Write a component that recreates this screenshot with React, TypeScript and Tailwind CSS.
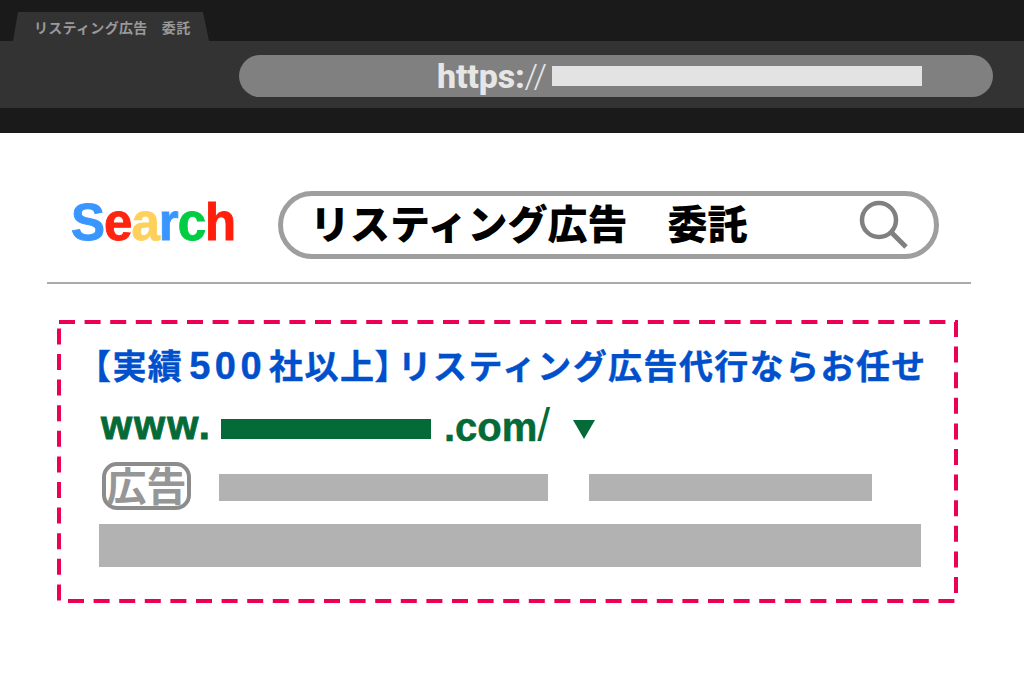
const jp = "font-['Noto_Sans_CJK_JP',sans-serif]"

function BrowserBar() {
  return (
    <header className="bg-[#1a1a1a] h-[133px]">
      <div className="h-[41px] pt-[12px] pl-[13px]">
        <div className={`h-[29px] w-[196px] bg-[#333333] [clip-path:polygon(5px_0,190px_0,196px_100%,0_100%)] pl-[21px] text-[14px] tracking-[0.3px] leading-[30px] font-bold text-[#999999] whitespace-pre ${jp}`}>
          リスティング広告　委託
        </div>
      </div>
      <div className="h-[67px] bg-[#333333] pl-[239px] pt-[14px]">
        <div className="w-[754px] h-[42px] rounded-full bg-[#808080] flex items-center pl-[198px] gap-[6px]">
          <span className="font-['Roboto',sans-serif] font-extrabold text-[34px] leading-none text-[#e6e6e6] tracking-[-0.2px]">
            https:<span className="font-light tracking-[-1px]">//</span>
          </span>
          <div className="w-[370px] h-[20px] bg-[#e3e3e3]" />
        </div>
      </div>
    </header>
  )
}

function SearchRow() {
  const logo = [
    ['S', 'text-[#3a96ff]'],
    ['e', 'text-[#ff2410]'],
    ['a', 'text-[#ffd05c]'],
    ['r', 'text-[#3a96ff]'],
    ['c', 'text-[#00cc44]'],
    ['h', 'text-[#ff1f0a]'],
  ]

  return (
    <div className="ml-[47px] w-[924px] h-[151px] pt-[58px] border-b-2 border-[#aaaaaa]">
      <div className="flex items-center">
        <div className="ml-[24px] w-[207px] h-[68px] font-['Liberation_Sans',sans-serif] font-bold text-[51px] leading-[63px] tracking-[-1px] [-webkit-text-stroke:0.9px]">
          {logo.map(([letter, color]) => (
            <span key={letter} className={color}>{letter}</span>
          ))}
        </div>
        <div className="w-[661px] h-[68px] rounded-full border-[5px] border-[#9e9e9e] flex items-center justify-between pl-[27px] pr-[24px]">
          <span className={`text-[40px] h-[58px] leading-[52px] font-black text-black whitespace-pre ${jp}`}>
            リスティング広告　委託
          </span>
          <svg width="52" height="52" viewBox="0 0 52 52" fill="none" stroke="#808080" strokeWidth="4.5">
            <circle cx="21" cy="21" r="17" />
            <path d="M33 33 L48 48" strokeWidth="5" />
          </svg>
        </div>
      </div>
    </div>
  )
}

function AdCard() {
  return (
    <section className="relative ml-[59px] mt-[38px] w-[897px] h-[279px] pt-[23px] pl-[18px]">
      <svg className="absolute left-0 top-0 overflow-visible" width="897" height="279" fill="none">
        <rect x="0" y="0" width="897" height="279" stroke="#eb0055" strokeWidth="4" strokeDasharray="16 9.6" />
      </svg>
      <h2 className={`h-[40px] text-[#0050cc] text-[34px] leading-[40px] font-bold tracking-[1.4px] whitespace-pre [-webkit-text-stroke:0.4px] ${jp}`}>
        【実績<span className="ml-[6px] mr-[3px] font-['Liberation_Sans',sans-serif] text-[38px] tracking-[4.5px]">500</span>社以上<span className="mr-[4px] [font-feature-settings:'palt']">】</span>リスティング広告代行ならお任せ
      </h2>
      <div className="flex items-center h-[44px] mt-[22px] ml-[24px] text-[#046a38] font-['Liberation_Sans',sans-serif] font-bold text-[40px] leading-none">
        <span className="w-[120px] mb-[8px] tracking-[2px] [-webkit-text-stroke:0.9px]">www.</span>
        <div className="w-[210px] h-[20px] bg-[#046a38]" />
        <span className="ml-[13px] mb-[8px] [-webkit-text-stroke:0.5px]">.com<span className="font-normal text-[46px] [-webkit-text-stroke:0px]">/</span></span>
        <svg className="ml-[23px]" width="22" height="20" viewBox="0 0 22 20">
          <polygon points="0,1 22,1 11,20" fill="#046a38" />
        </svg>
      </div>
      <div className="flex items-center mt-[11px] ml-[25px]">
        <div className={`w-[89px] h-[48px] pb-[5px] rounded-[15px] border-[4px] border-[#8c8c8c] text-[#969696] text-[40px] leading-none font-bold flex items-center justify-center whitespace-nowrap ${jp}`}>
          広告
        </div>
        <div className="ml-[28px] mt-[3px] w-[329px] h-[27px] bg-[#b2b2b2]" />
        <div className="ml-[41px] mt-[3px] w-[283px] h-[27px] bg-[#b2b2b2]" />
      </div>
      <div className="mt-[14px] ml-[22px] w-[822px] h-[43px] bg-[#b2b2b2]" />
    </section>
  )
}

export default function App() {
  return (
    <div className="w-[1024px] h-[682px] bg-white overflow-hidden">
      <BrowserBar />
      <SearchRow />
      <AdCard />
    </div>
  )
}
